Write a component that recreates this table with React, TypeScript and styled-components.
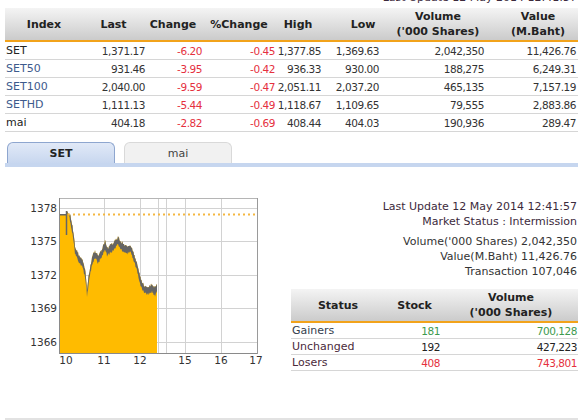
import React from "react";
import styled, { createGlobalStyle } from "styled-components";

const Global = createGlobalStyle`
  html, body { margin: 0; padding: 0; background: #fff; overflow: hidden; }
  body { font-family: "DejaVu Sans", Verdana, sans-serif; font-size: 11px; color: #333; }
`;

const COLS = "75px 67px 57px 73px 46px 58px 105px 92px";

const Page = styled.div`
  width: 583px;
  height: 420px;
  overflow: hidden;
  padding: 0 5px;
  box-sizing: border-box;
`;

const TopCaption = styled.div`
  height: 14px;
  line-height: 14px;
  margin-top: -9px;
  margin-bottom: 3px;
  text-align: right;
  padding-right: 1px;
  color: #3c2a3c;
`;

const HeadRow = styled.div<{ $cols: string }>`
  display: grid;
  grid-template-columns: ${(p) => p.$cols};
  height: 32px;
  background: linear-gradient(#f4f4f4, #cbcbcb);
  border-bottom: 2px solid #f2a31b;
`;

const HeadCell = styled.div<{ $pl?: number; $pr?: number }>`
  display: flex;
  align-items: center;
  justify-content: center;
  text-align: center;
  font-weight: bold;
  line-height: 15px;
  color: #222;
  white-space: nowrap;
  padding-left: ${(p) => p.$pl ?? 0}px;
  padding-right: ${(p) => p.$pr ?? 0}px;
`;

const DataRow = styled.div<{ $cols: string; $h: number }>`
  display: grid;
  grid-template-columns: ${(p) => p.$cols};
  height: ${(p) => p.$h - 1}px;
  align-items: center;
  border-bottom: 1px solid #d6d6d6;
`;

const Cell = styled.div<{ $left?: boolean; $color?: string; $pr?: number }>`
  display: flex;
  justify-content: ${(p) => (p.$left ? "flex-start" : "flex-end")};
  padding-left: ${(p) => (p.$left ? 1 : 0)}px;
  padding-right: ${(p) => (p.$left ? 0 : p.$pr ?? 2)}px;
  color: ${(p) => p.$color ?? "#333"};
  font-size: ${(p) => (p.$left ? 11 : 10.5)}px;
  letter-spacing: ${(p) => (p.$left ? 0 : -0.45)}px;
  white-space: nowrap;
`;

const TabStrip = styled.div`
  display: flex;
  align-items: flex-end;
  gap: 9px;
  margin-top: 10px;
  padding-left: 2px;
  border-bottom: 4px solid #c6d6ef;
`;

const Tab = styled.div<{ $active?: boolean }>`
  width: 106px;
  height: 20px;
  display: flex;
  align-items: center;
  justify-content: center;
  border: 1px solid ${(p) => (p.$active ? "#8ea6cf" : "#d9d9d9")};
  border-bottom: none;
  border-radius: 6px 6px 0 0;
  background: ${(p) => (p.$active ? "linear-gradient(#e1e9f7, #c8d7ef)" : "#f1f1f1")};
  font-weight: ${(p) => (p.$active ? "bold" : "normal")};
  color: ${(p) => (p.$active ? "#222" : "#444")};
`;

const Lower = styled.div`
  display: flex;
  margin-top: 27px;
`;

const ChartCol = styled.div`
  width: 286px;
  flex: none;
`;

const RightCol = styled.div`
  flex: 1;
  padding-top: 5px;
`;

const Info = styled.div`
  text-align: right;
  padding-right: 1px;
  line-height: 15px;
  color: #333;
`;

const InfoGroup = styled.div<{ $gap?: number }>`
  margin-top: ${(p) => p.$gap ?? 0}px;
`;

const Maroon = styled.span`
  color: #3c2a3c;
`;

const StatusTable = styled.div`
  margin-top: 10px;
`;

const Footer = styled.div`
  height: 8px;
  margin-top: 44px;
  background: #e2e2e2;
`;

const RED = "#e5303e";
const GREEN = "#3e9a4e";
const BLUE = "#3d5a8c";

type IndexRow = { name: string; link?: boolean; v: string[] };
const INDEX_ROWS: IndexRow[] = [
  { name: "SET", v: ["1,371.17", "-6.20", "-0.45", "1,377.85", "1,369.63", "2,042,350", "11,426.76"] },
  { name: "SET50", link: true, v: ["931.46", "-3.95", "-0.42", "936.33", "930.00", "188,275", "6,249.31"] },
  { name: "SET100", link: true, v: ["2,040.00", "-9.59", "-0.47", "2,051.11", "2,037.20", "465,135", "7,157.19"] },
  { name: "SETHD", link: true, v: ["1,111.13", "-5.44", "-0.49", "1,118.67", "1,109.65", "79,555", "2,883.86"] },
  { name: "mai", v: ["404.18", "-2.82", "-0.69", "408.44", "404.03", "190,936", "289.47"] },
];

const KEYS: [number, number][] = [
  [59, 215], [66, 215], [67, 212], [68, 214], [70, 217], [73, 232], [75, 249], [78, 256],
  [82, 262], [85, 272], [86, 281], [87, 292], [88, 284], [90, 270], [93, 257], [95, 254],
  [98, 258], [102, 252], [105, 244], [107, 251], [112, 247], [115, 244], [118, 240],
  [120, 243], [123, 247], [127, 249], [130, 247], [133, 254], [137, 266], [140, 279],
  [143, 287], [147, 290], [152, 287], [155, 291], [157, 286],
];

function interp(x: number): number {
  for (let i = 0; i < KEYS.length - 1; i++) {
    const [x0, y0] = KEYS[i];
    const [x1, y1] = KEYS[i + 1];
    if (x >= x0 && x <= x1) return y0 + ((y1 - y0) * (x - x0)) / (x1 - x0);
  }
  return KEYS[KEYS.length - 1][1];
}

function noise(x: number, s: number): number {
  const v = Math.sin(x * 12.9898 + s * 78.233) * 43758.5453;
  return v - Math.floor(v);
}

const Chart: React.FC = () => {
  const top: [number, number][] = [];
  const bot: [number, number][] = [];
  for (let x = 59; x <= 157; x += 0.5) {
    const b = interp(x);
    const early = x < 70;
    const up = early ? 0 : noise(x, 1) * 3.5;
    const dn = early ? 1.5 : 4 + noise(x, 2) * 3;
    top.push([x, b - up]);
    bot.push([x, b + dn]);
  }
  const fill =
    `59,354 ` + top.map(([x, y]) => `${x},${y.toFixed(1)}`).join(" ") + ` 157,354`;
  const band =
    top.map(([x, y]) => `${x},${y.toFixed(1)}`).join(" ") +
    " " +
    bot
      .slice()
      .reverse()
      .map(([x, y]) => `${x},${y.toFixed(1)}`)
      .join(" ");
  const hLines = [209, 242, 276, 309, 343];
  const vLines = [104, 140, 158, 166, 185, 221];
  const yLabels = ["1378", "1375", "1372", "1369", "1366"];
  const xLabels: [number, string][] = [
    [66, "10"], [104, "11"], [140, "12"], [185, "15"], [221, "16"], [256, "17"],
  ];
  return (
    <svg width={286} height={180} viewBox="5 195 286 180" style={{ display: "block" }}>
      <rect x={59.5} y={199.5} width={198} height={155} fill="#fff" stroke="#b5b5b5" />
      {hLines.map((y) => (
        <line key={y} x1={59} x2={257} y1={y + 0.5} y2={y + 0.5} stroke="#d2d2d2" />
      ))}
      {vLines.map((x) => (
        <line key={x} x1={x + 0.5} x2={x + 0.5} y1={200} y2={354} stroke="#d2d2d2" />
      ))}
      <polygon points={fill} fill="#ffbb00" />
      <polygon points={band} fill="#656565" />
      <line x1={66.5} x2={66.5} y1={212} y2={236} stroke="#656565" strokeWidth={1.5} />
      <line x1={68} x2={257} y1={215.5} y2={215.5} stroke="#f5b740" strokeWidth={2} strokeDasharray="2 3" />
      <line x1={59.5} x2={59.5} y1={199} y2={355} stroke="#8a8a8a" />
      <line x1={59} x2={258} y1={354.5} y2={354.5} stroke="#8a8a8a" />
      <line x1={257.5} x2={257.5} y1={199} y2={355} stroke="#9a9a9a" />
      {yLabels.map((t, i) => (
        <text key={t} x={57} y={hLines[i] + 4} textAnchor="end" fontSize={10.5} fill="#333"
          fontFamily='"DejaVu Sans", Verdana, sans-serif'>
          {t}
        </text>
      ))}
      {xLabels.map(([x, t]) => (
        <text key={t} x={x} y={365} textAnchor="middle" fontSize={10.5} fill="#333"
          fontFamily='"DejaVu Sans", Verdana, sans-serif'>
          {t}
        </text>
      ))}
    </svg>
  );
};

export default function App() {
  return (
    <Page>
      <Global />
      <TopCaption>Last Update 12 May 2014 12:41:57</TopCaption>
      <HeadRow $cols={COLS}>
        <HeadCell $pl={3}>Index</HeadCell>
        <HeadCell>Last</HeadCell>
        <HeadCell $pr={5}>Change</HeadCell>
        <HeadCell $pr={3}>%Change</HeadCell>
        <HeadCell $pr={4}>High</HeadCell>
        <HeadCell $pl={22}>Low</HeadCell>
        <HeadCell $pl={9}>Volume<br />('000 Shares)</HeadCell>
        <HeadCell $pl={12}>Value<br />(M.Baht)</HeadCell>
      </HeadRow>
      {INDEX_ROWS.map((r) => (
        <DataRow key={r.name} $cols={COLS} $h={18}>
          <Cell $left $color={r.link ? BLUE : "#222"}>{r.name}</Cell>
          <Cell>{r.v[0]}</Cell>
          <Cell $color={RED}>{r.v[1]}</Cell>
          <Cell $color={RED}>{r.v[2]}</Cell>
          <Cell>{r.v[3]}</Cell>
          <Cell>{r.v[4]}</Cell>
          <Cell>{r.v[5]}</Cell>
          <Cell>{r.v[6]}</Cell>
        </DataRow>
      ))}
      <TabStrip>
        <Tab $active>SET</Tab>
        <Tab>mai</Tab>
      </TabStrip>
      <Lower>
        <ChartCol>
          <Chart />
        </ChartCol>
        <RightCol>
          <Info>
            <InfoGroup>
              <div><Maroon>Last Update 12 May 2014 12:41:57</Maroon></div>
              <div><Maroon>Market Status : Intermission</Maroon></div>
            </InfoGroup>
            <InfoGroup $gap={5}>
              <div>Volume('000 Shares) 2,042,350</div>
              <div>Value(M.Baht) 11,426.76</div>
              <div>Transaction 107,046</div>
            </InfoGroup>
          </Info>
          <StatusTable>
            <HeadRow $cols="94px 59px 1fr">
              <HeadCell>Status</HeadCell>
              <HeadCell>Stock</HeadCell>
              <HeadCell>Volume<br />('000 Shares)</HeadCell>
            </HeadRow>
            <DataRow $cols="94px 59px 1fr" $h={16}>
              <Cell $left $color="#34404e">Gainers</Cell>
              <Cell $color={GREEN} $pr={4}>181</Cell>
              <Cell $color={GREEN} $pr={1}>700,128</Cell>
            </DataRow>
            <DataRow $cols="94px 59px 1fr" $h={16}>
              <Cell $left $color="#4a2a3a">Unchanged</Cell>
              <Cell $pr={4} $color="#222">192</Cell>
              <Cell $pr={1} $color="#222">427,223</Cell>
            </DataRow>
            <DataRow $cols="94px 59px 1fr" $h={16}>
              <Cell $left $color="#4a2a3a">Losers</Cell>
              <Cell $color={RED} $pr={4}>408</Cell>
              <Cell $color={RED} $pr={1}>743,801</Cell>
            </DataRow>
          </StatusTable>
        </RightCol>
      </Lower>
      <Footer />
    </Page>
  );
}
